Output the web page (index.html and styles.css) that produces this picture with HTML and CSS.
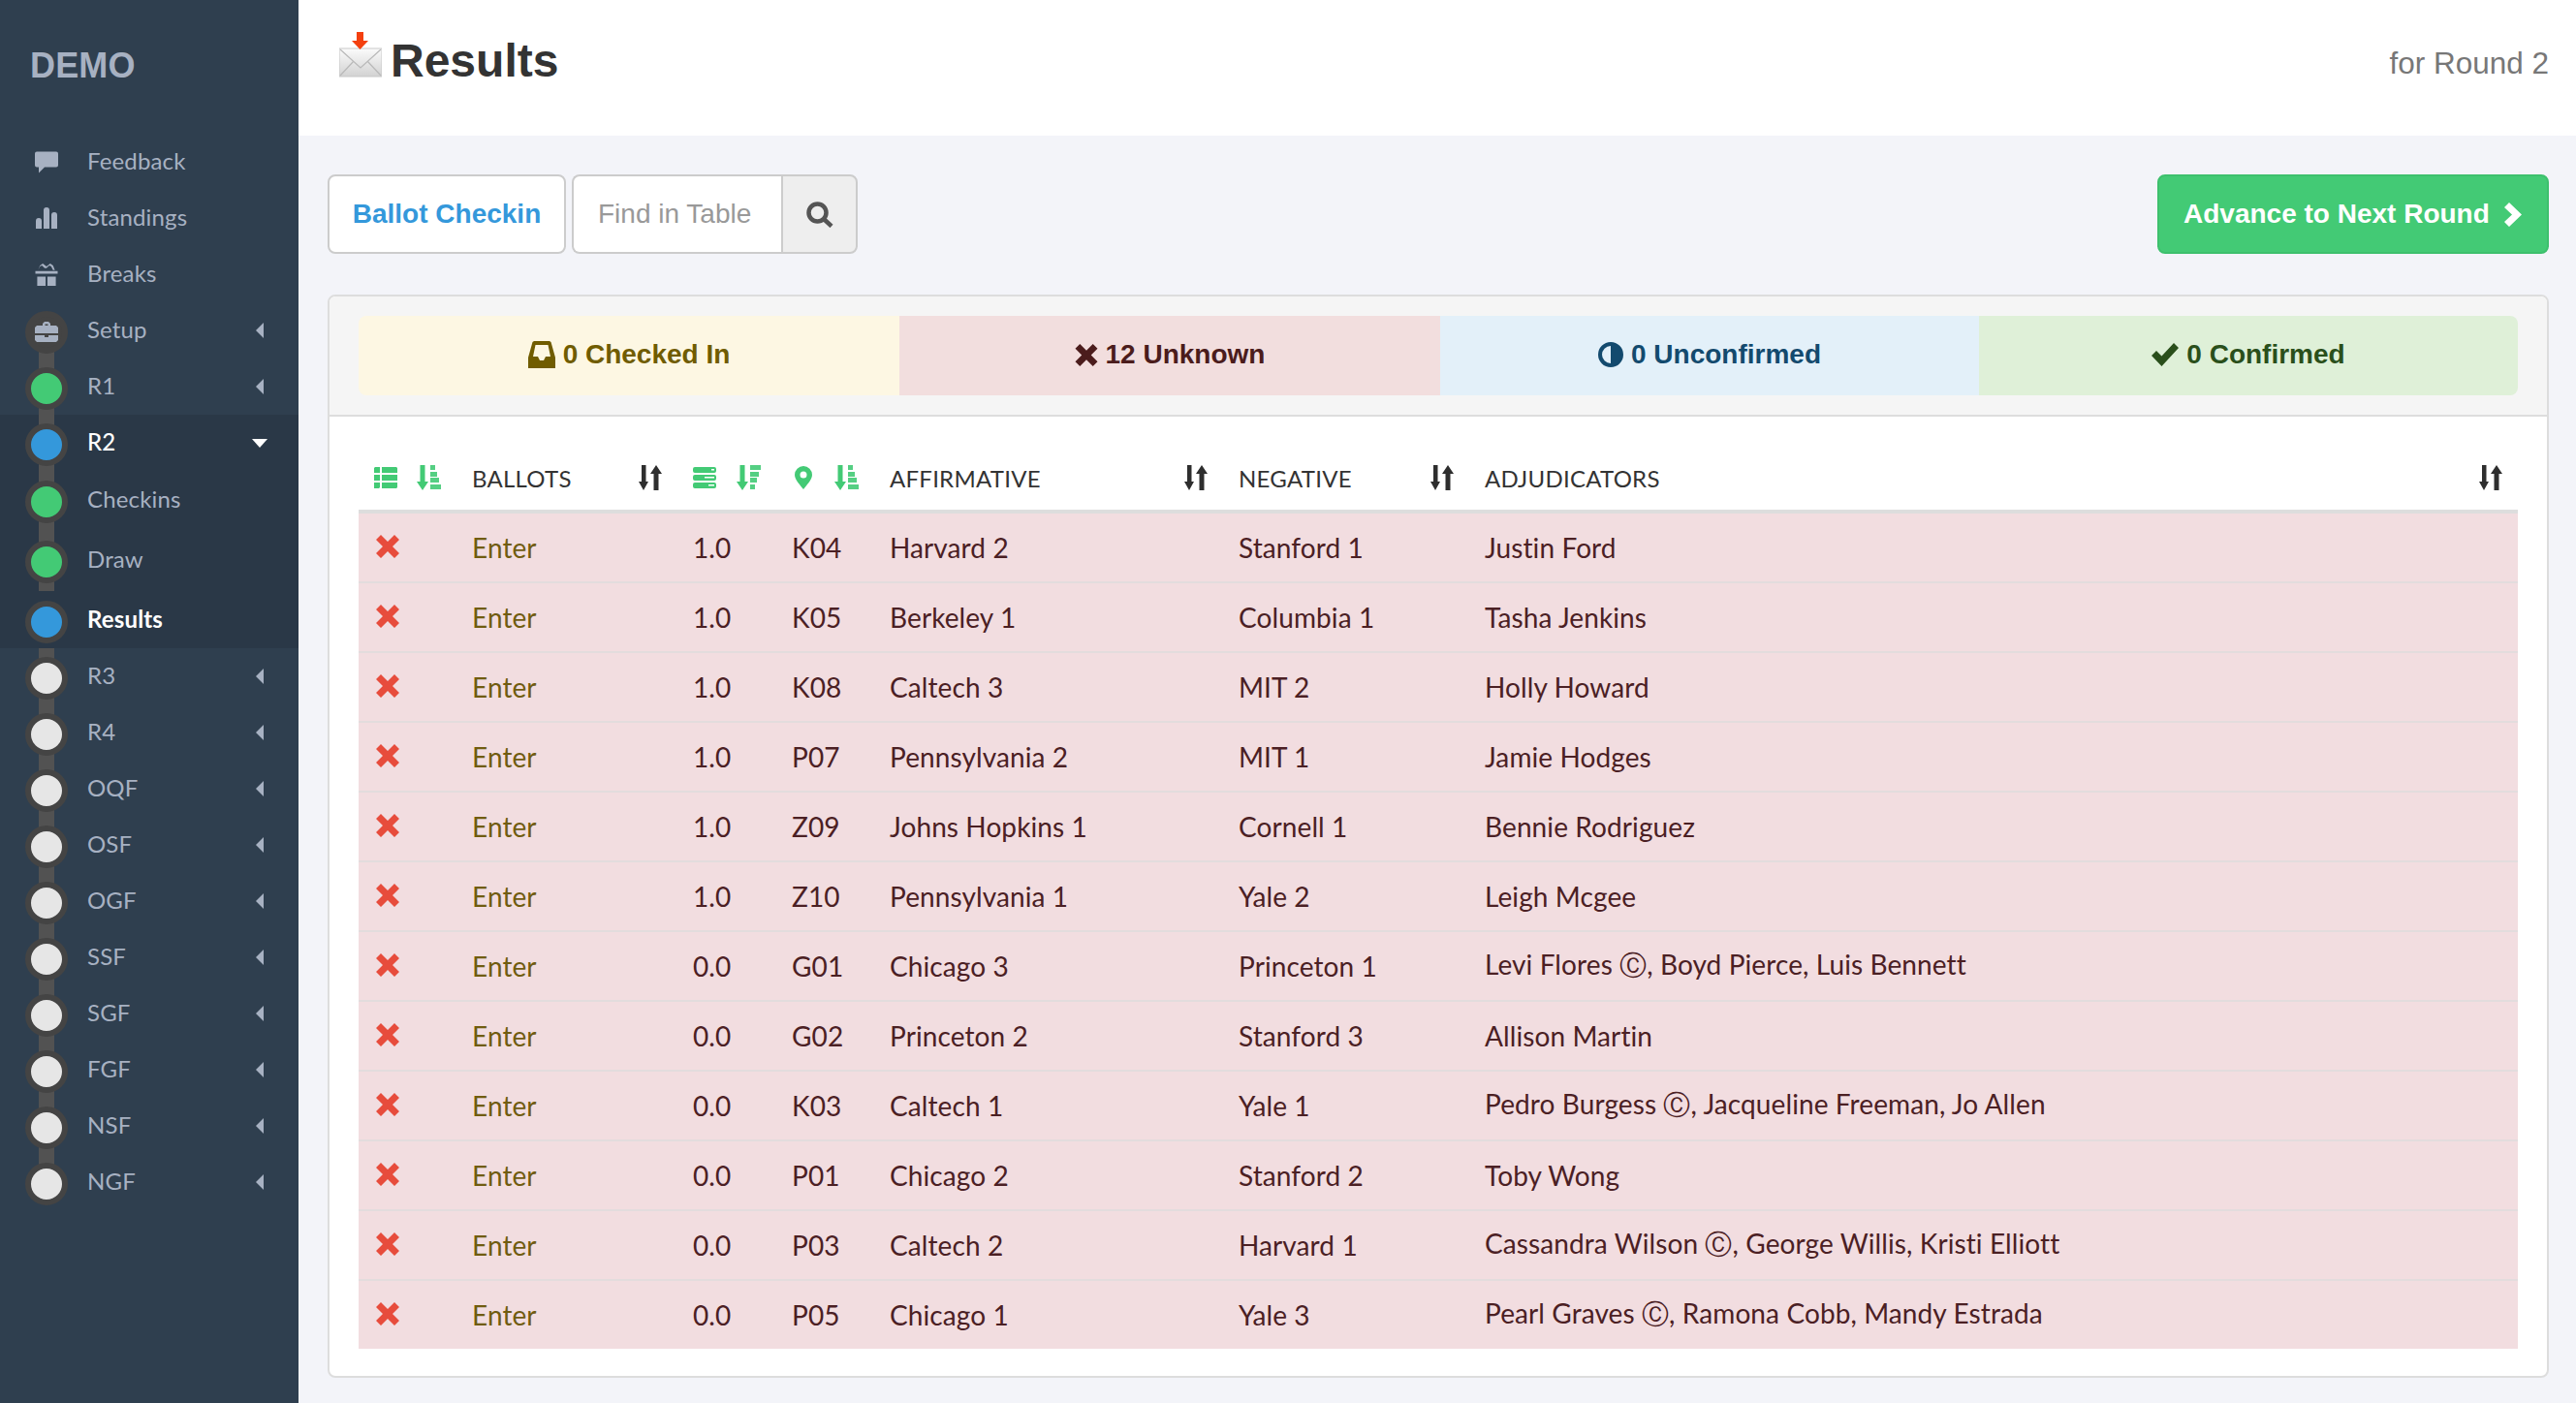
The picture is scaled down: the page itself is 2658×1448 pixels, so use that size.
FILE: index.html
```html
<!DOCTYPE html>
<html lang="en">
<head>
<meta charset="utf-8">
<title>Results</title>
<link rel="stylesheet" href="styles.css">
</head>
<body>
<svg class="sprite" width="0" height="0" aria-hidden="true">
  <symbol id="i-sort" viewBox="0 0 24 26"><path d="M3 0h4.500v17H10L5 26 0 17h3zM15.500 26V9H12l6-9 6 9h-3.500v17z"/></symbol>
  <symbol id="i-x" viewBox="0 0 24 24"><path d="M0 5 5 0l7 7 7-7 5 5-7 7 7 7-5 5-7-7-7 7-5-5 7-7z"/></symbol>
  <symbol id="i-list" viewBox="0 0 24 22"><path d="M1 0h5v6H0V1zM8 0h15l1 1v5H8zM0 8h6v6H0zM8 8h16v6H8zM0 16h6v5l-1 1H0zM8 16h16v5l-1 1H8z"/></symbol>
  <symbol id="i-asc" viewBox="0 0 25 26"><path d="M3.500 0h5v17H12l-6 9-6-9h3.500z"/><path d="M14 0h5v5h-5zM14 7h7v5h-7zM14 13h9v5h-9zM14 20h11v5H14z" opacity=".9"/></symbol>
  <symbol id="i-desc" viewBox="0 0 25 26"><path d="M3.500 0h5v17H12l-6 9-6-9h3.500z"/><path d="M14 0h11v5H14zM14 7h9v5h-9zM14 13h7v5h-7zM14 20h5v5h-5z" opacity=".9"/></symbol>
  <symbol id="i-tasks" viewBox="0 0 24 22"><path fill-rule="evenodd" d="M2 0h20a2 2 0 0 1 2 2v2a2 2 0 0 1-2 2H2a2 2 0 0 1-2-2V2a2 2 0 0 1 2-2zm17 2v1.500h3V2zM2 8h20a2 2 0 0 1 2 2v2a2 2 0 0 1-2 2H2a2 2 0 0 1-2-2v-2a2 2 0 0 1 2-2zm10 2v1.500h10V10zM2 16h20a2 2 0 0 1 2 2v2a2 2 0 0 1-2 2H2a2 2 0 0 1-2-2v-2a2 2 0 0 1 2-2zm14 2v1.500h6V18z"/></symbol>
  <symbol id="i-pin" viewBox="0 0 18 24"><path fill-rule="evenodd" d="M9 0a9 9 0 0 1 9 9c0 5-6 11-9 15C6 20 0 14 0 9a9 9 0 0 1 9-9zm0 5.500a3.500 3.500 0 1 0 0 7 3.500 3.500 0 0 0 0-7z"/></symbol>
  <symbol id="i-inbox" viewBox="0 0 28 28"><path fill-rule="evenodd" d="M6 0h16l1.500 1L28 17v11H0V17L4.500 1zm1.500 4L5 16h5l2 4h4l2-4h5L20.500 4z"/></symbol>
  <symbol id="i-check" viewBox="0 0 28 24"><path d="M0 13l5-5 5.500 5.500L23 0l5 5-17.500 19z"/></symbol>
  <symbol id="i-chev" viewBox="0 0 18 25"><path d="M5 0l13 12.500L5 25l-5-5 8-7.500L0 5z"/></symbol>
  <symbol id="i-search" viewBox="0 0 28 27"><path fill="none" stroke="currentColor" stroke-width="4.500" d="M11.500 2.500a9 9 0 1 0 0 18 9 9 0 0 0 0-18zM18 18l8 7.500"/></symbol>
  <symbol id="i-comment" viewBox="0 0 24 22"><path d="M2 0h20a2 2 0 0 1 2 2v12a2 2 0 0 1-2 2H10l-6 6v-6H2a2 2 0 0 1-2-2V2a2 2 0 0 1 2-2z"/></symbol>
  <symbol id="i-stats" viewBox="0 0 22 22"><path d="M0 14a3 3 0 0 1 6 0v8H0zM8 3a3 3 0 0 1 6 0v19H8zM16 8a3 3 0 0 1 6 0v14h-6z"/></symbol>
  <symbol id="i-gift" viewBox="0 0 24 24"><path fill-rule="evenodd" d="M2 24V14h9v10zM13 24V14h9v10zM0 11V8h24v3zM3 7l2-5 3-2 4 3 4-3 3 2 2 5h-2l-2-4-2-1-3 3-2 0-3-3-2 1-2 4z"/></symbol>
  <symbol id="i-case" viewBox="0 0 24 21"><path fill-rule="evenodd" d="M8 4V2l2-2h4l2 2v2h6l2 2v6H0V6l2-2zm2.500 0h3V2.500h-3zM0 14h10v2h4v-2h10v5l-2 2H2l-2-2z"/></symbol>
</svg>
<div class="app">
  <aside class="sidebar">
    <div class="brand">DEMO</div>
    <nav class="nav">
      <a class="row"><span class="slot"><svg class="ico i24"><use href="#i-comment"/></svg></span><span class="lbl">Feedback</span></a>
      <a class="row"><span class="slot"><svg class="ico i22"><use href="#i-stats"/></svg></span><span class="lbl">Standings</span></a>
      <a class="row"><span class="slot"><svg class="ico i24"><use href="#i-gift"/></svg></span><span class="lbl">Breaks</span></a>
      <a class="row track first"><span class="dot dark"><svg class="ico i24"><use href="#i-case"/></svg></span><span class="lbl">Setup</span><i class="caret"></i></a>
      <a class="row track"><span class="dot green"></span><span class="lbl">R1</span><i class="caret"></i></a>
      <div class="section">
        <a class="row track current"><span class="dot blue"></span><span class="lbl">R2</span><i class="caret down"></i></a>
        <div class="sub">
          <a class="row track"><span class="dot green"></span><span class="lbl">Checkins</span></a>
          <a class="row track"><span class="dot green"></span><span class="lbl">Draw</span></a>
          <a class="row current strong"><span class="dot blue"></span><span class="lbl">Results</span></a>
        </div>
      </div>
      <a class="row track"><span class="dot"></span><span class="lbl">R3</span><i class="caret"></i></a>
      <a class="row track"><span class="dot"></span><span class="lbl">R4</span><i class="caret"></i></a>
      <a class="row track"><span class="dot"></span><span class="lbl">OQF</span><i class="caret"></i></a>
      <a class="row track"><span class="dot"></span><span class="lbl">OSF</span><i class="caret"></i></a>
      <a class="row track"><span class="dot"></span><span class="lbl">OGF</span><i class="caret"></i></a>
      <a class="row track"><span class="dot"></span><span class="lbl">SSF</span><i class="caret"></i></a>
      <a class="row track"><span class="dot"></span><span class="lbl">SGF</span><i class="caret"></i></a>
      <a class="row track"><span class="dot"></span><span class="lbl">FGF</span><i class="caret"></i></a>
      <a class="row track"><span class="dot"></span><span class="lbl">NSF</span><i class="caret"></i></a>
      <a class="row track last"><span class="dot"></span><span class="lbl">NGF</span><i class="caret"></i></a>
    </nav>
  </aside>
  <main class="main">
    <header class="topbar">
      <h1 class="title">
        <svg class="envelope" viewBox="0 0 44 47">
          <defs><linearGradient id="env" x1="0" y1="0" x2="0" y2="1"><stop offset="0" stop-color="#fbfbfb"/><stop offset="1" stop-color="#d2d2d2"/></linearGradient></defs>
          <path d="M0 17h44v29H0z" fill="url(#env)" stroke="#c8c8c8"/>
          <path d="M1 18l21 19 21-19M1 45l14-15M43 45L29 30" fill="none" stroke="#b9b9b9" stroke-width="1.200"/>
          <path d="M18 0h7v9h5l-8.500 9L13 9h5z" fill="#f4400f"/>
        </svg>
        <span>Results</span>
      </h1>
      <div class="subtitle">for Round 2</div>
    </header>
    <section class="content">
      <div class="toolbar">
        <a class="btn btn-light">Ballot Checkin</a>
        <div class="search">
          <input class="search-input" placeholder="Find in Table">
          <span class="search-addon"><svg class="s-search"><use href="#i-search"/></svg></span>
        </div>
        <a class="btn btn-green">Advance to Next Round <svg class="s-chev"><use href="#i-chev"/></svg></a>
      </div>
      <div class="panel">
        <div class="panel-head">
          <div class="status">
            <div class="stat st-yellow"><svg class="s-inbox"><use href="#i-inbox"/></svg>0 Checked In</div>
            <div class="stat st-red"><svg class="s-x"><use href="#i-x"/></svg>12 Unknown</div>
            <div class="stat st-blue"><svg class="s-half" viewBox="0 0 26 26"><circle cx="13" cy="13" r="11" fill="none" stroke="currentColor" stroke-width="4"/><path d="M13 2a11 11 0 0 1 0 22z" fill="currentColor"/></svg>0 Unconfirmed</div>
            <div class="stat st-green"><svg class="s-check"><use href="#i-check"/></svg>0 Confirmed</div>
          </div>
        </div>
        <div class="panel-body">
          <table class="results">
            <colgroup><col class="c1"><col class="c2"><col class="c3"><col class="c4"><col class="c5"><col class="c6"><col class="c7"></colgroup>
            <thead>
              <tr>
                <th><div class="th"><svg class="g l24"><use href="#i-list"/></svg><svg class="g s25"><use href="#i-asc"/></svg></div></th>
                <th><div class="th"><span>BALLOTS</span><svg class="sort"><use href="#i-sort"/></svg></div></th>
                <th><div class="th"><svg class="g l24"><use href="#i-tasks"/></svg><svg class="g s25"><use href="#i-desc"/></svg></div></th>
                <th><div class="th pinned"><svg class="g p18"><use href="#i-pin"/></svg><svg class="g s25"><use href="#i-asc"/></svg></div></th>
                <th><div class="th"><span>AFFIRMATIVE</span><svg class="sort"><use href="#i-sort"/></svg></div></th>
                <th><div class="th"><span>NEGATIVE</span><svg class="sort"><use href="#i-sort"/></svg></div></th>
                <th><div class="th"><span>ADJUDICATORS</span><svg class="sort"><use href="#i-sort"/></svg></div></th>
              </tr>
            </thead>
            <tbody>
              <tr><td><svg class="rm"><use href="#i-x"/></svg></td><td class="enter">Enter</td><td>1.0</td><td>K04</td><td>Harvard 2</td><td>Stanford 1</td><td>Justin Ford</td></tr>
              <tr><td><svg class="rm"><use href="#i-x"/></svg></td><td class="enter">Enter</td><td>1.0</td><td>K05</td><td>Berkeley 1</td><td>Columbia 1</td><td>Tasha Jenkins</td></tr>
              <tr><td><svg class="rm"><use href="#i-x"/></svg></td><td class="enter">Enter</td><td>1.0</td><td>K08</td><td>Caltech 3</td><td>MIT 2</td><td>Holly Howard</td></tr>
              <tr><td><svg class="rm"><use href="#i-x"/></svg></td><td class="enter">Enter</td><td>1.0</td><td>P07</td><td>Pennsylvania 2</td><td>MIT 1</td><td>Jamie Hodges</td></tr>
              <tr><td><svg class="rm"><use href="#i-x"/></svg></td><td class="enter">Enter</td><td>1.0</td><td>Z09</td><td>Johns Hopkins 1</td><td>Cornell 1</td><td>Bennie Rodriguez</td></tr>
              <tr><td><svg class="rm"><use href="#i-x"/></svg></td><td class="enter">Enter</td><td>1.0</td><td>Z10</td><td>Pennsylvania 1</td><td>Yale 2</td><td>Leigh Mcgee</td></tr>
              <tr><td><svg class="rm"><use href="#i-x"/></svg></td><td class="enter">Enter</td><td>0.0</td><td>G01</td><td>Chicago 3</td><td>Princeton 1</td><td>Levi Flores Ⓒ, Boyd Pierce, Luis Bennett</td></tr>
              <tr><td><svg class="rm"><use href="#i-x"/></svg></td><td class="enter">Enter</td><td>0.0</td><td>G02</td><td>Princeton 2</td><td>Stanford 3</td><td>Allison Martin</td></tr>
              <tr><td><svg class="rm"><use href="#i-x"/></svg></td><td class="enter">Enter</td><td>0.0</td><td>K03</td><td>Caltech 1</td><td>Yale 1</td><td>Pedro Burgess Ⓒ, Jacqueline Freeman, Jo Allen</td></tr>
              <tr><td><svg class="rm"><use href="#i-x"/></svg></td><td class="enter">Enter</td><td>0.0</td><td>P01</td><td>Chicago 2</td><td>Stanford 2</td><td>Toby Wong</td></tr>
              <tr><td><svg class="rm"><use href="#i-x"/></svg></td><td class="enter">Enter</td><td>0.0</td><td>P03</td><td>Caltech 2</td><td>Harvard 1</td><td>Cassandra Wilson Ⓒ, George Willis, Kristi Elliott</td></tr>
              <tr><td><svg class="rm"><use href="#i-x"/></svg></td><td class="enter">Enter</td><td>0.0</td><td>P05</td><td>Chicago 1</td><td>Yale 3</td><td>Pearl Graves Ⓒ, Ramona Cobb, Mandy Estrada</td></tr>
            </tbody>
          </table>
        </div>
      </div>
    </section>
  </main>
</div>
</body>
</html>
```
FILE: styles.css
```css
* { box-sizing: border-box; }
html, body { margin: 0; height: 100%; }
body {
  font-family: "Lato", "DejaVu Sans", sans-serif;
  background: #f3f4f9;
  overflow: hidden;
}
.sprite { position: absolute; }
.app { display: flex; height: 1448px; }

/* Sidebar */
.sidebar { width: 308px; flex: none; background: #2f3f4f; color: #a7b1c2; font-size: 24px; letter-spacing: .15px; }
.brand {
  height: 138px;
  padding: 48px 0 0 31px;
  font: bold 36px/40px "Liberation Sans", Arial, sans-serif;
  color: #a7b1c2;
}
.nav { display: flex; flex-direction: column; }
.row {
  position: relative;
  display: flex;
  align-items: center;
  height: 58px;
  padding-left: 26px;
}
.lbl { margin-bottom: 3px; }
.slot, .dot {
  position: relative;
  z-index: 1;
  width: 44px;
  height: 44px;
  margin-right: 20px;
  flex: none;
  display: flex;
  align-items: center;
  justify-content: center;
}
.slot svg { fill: #a7b1c2; }
.dot {
  margin-top: 4px;
  border-radius: 50%;
  border: 6px solid #444;
  background: #e6e6e6;
}
.dot.green { background: #43ca75; }
.dot.blue { background: #3498db; }
.dot.dark { background: #444; margin-top: 4px; }
.dark svg { fill: #a7b1c2; position: relative; top: -1px; }
.ico { display: block; }
.i24 { width: 24px; height: 23px; }
.i22 { width: 22px; height: 22px; }
.track::before {
  content: "";
  position: absolute;
  left: 40px;
  width: 16px;
  top: 0;
  bottom: 0;
  background: #525252;
}
.track.first::before { top: 50%; }
.track.last::before { bottom: 50%; }
.caret {
  position: absolute;
  left: 264px;
  top: 21px;
  width: 0;
  height: 0;
  border-style: solid;
  border-width: 8px 8px 8px 0;
  border-color: transparent #a7b1c2 transparent transparent;
}
.caret.down {
  left: 260px;
  top: 25px;
  border-width: 9px 8px 0 8px;
  border-color: #fff transparent transparent transparent;
}
.section { background: #2a3847; height: 241px; }
.sub { display: flex; flex-direction: column; gap: 4px; padding-top: 1px; }
.sub .track::before { top: -4px; bottom: -3px; }
.current { color: #fff; font-weight: 500; }
.strong { font-weight: 700; }

/* Main */
.main { flex: 1; min-width: 0; display: flex; flex-direction: column; }
.topbar {
  height: 140px;
  flex: none;
  background: #fff;
  display: flex;
  justify-content: space-between;
  align-items: flex-start;
  padding: 33px 28px 0 42px;
  font-family: "Liberation Sans", Arial, sans-serif;
}
.title {
  display: flex;
  align-items: flex-start;
  gap: 9px;
  margin: 0;
  font-size: 48px;
  line-height: 48px;
  font-weight: 700;
  color: #333;
}
.title span { margin-top: 6px; }
.envelope { width: 44px; height: 47px; flex: none; }
.subtitle { margin-top: 12px; font-size: 31.5px; line-height: 40px; color: #777; }

.content { padding: 40px 28px 0 30px; }
.toolbar {
  display: flex;
  gap: 6px;
  height: 82px;
  margin-bottom: 42px;
  font-family: "Liberation Sans", Arial, sans-serif;
  font-size: 28px;
}
.btn {
  display: flex;
  align-items: center;
  height: 82px;
  border-radius: 8px;
  font-weight: 700;
}
.btn-light { width: 246px; justify-content: center; background: #fff; border: 2px solid #ccc; color: #3498db; }
.btn-green {
  width: 404px;
  margin-left: auto;
  justify-content: flex-start;
  gap: 8px;
  padding-left: 25px;
  background: #43ca75;
  border: 2px solid #3dc06d;
  color: #fff;
}
.s-chev { width: 18px; height: 25px; fill: #fff; margin-left: 7px; }
.search { display: flex; width: 295px; }
.search-input {
  width: 216px;
  height: 82px;
  padding: 0 0 0 25px;
  border: 2px solid #ccc;
  border-right: 0;
  border-radius: 8px 0 0 8px;
  background: #fff;
  font: 28px "Liberation Sans", Arial, sans-serif;
  outline: 0;
}
.search-input::placeholder { color: #999; opacity: 1; }
.search-addon {
  flex: 1;
  display: flex;
  align-items: center;
  justify-content: center;
  border: 2px solid #ccc;
  border-radius: 0 8px 8px 0;
  background: #eee;
  color: #555;
}
.s-search { width: 28px; height: 27px; }

.panel {
  height: 1118px;
  background: #fff;
  border: 2px solid #ddd;
  border-radius: 8px;
}
.panel-head {
  height: 124px;
  padding: 20px 30px;
  background: #f5f5f5;
  border-bottom: 2px solid #ddd;
  border-radius: 6px 6px 0 0;
}
.status { display: grid; grid-template-columns: 558px 558px 556px 556px; height: 82px; }
.stat {
  display: flex;
  align-items: center;
  justify-content: center;
  gap: 8px;
  padding-bottom: 2px;
  font: bold 28px "Liberation Sans", Arial, sans-serif;
}
.st-yellow { background: #fdf7e3; color: #705c00; border-radius: 8px 0 0 8px; }
.st-red { background: #f2dede; color: #4b1c1c; }
.st-blue { background: #e3f0f9; color: #134a6e; }
.st-green { background: #dff0d8; color: #2a4f1b; border-radius: 0 8px 8px 0; }
.s-inbox { width: 28px; height: 28px; fill: currentColor; }
.s-x { width: 24px; height: 23px; fill: currentColor; }
.s-half { width: 26px; height: 26px; }
.s-check { width: 28px; height: 24px; fill: currentColor; }

.panel-body { padding: 30px 30px 28px; }
.results {
  width: 100%;
  table-layout: fixed;
  border-collapse: separate;
  border-spacing: 0;
  font-size: 28px;
  letter-spacing: .1px;
  color: #4b2024;
}
.c1 { width: 101px; } .c2 { width: 228px; } .c3 { width: 102px; } .c4 { width: 101px; }
.c5 { width: 360px; } .c6 { width: 254px; } .c7 { width: 1082px; }
.results th {
  height: 70px;
  padding: 0 16px;
  border-bottom: 4px solid #ddd;
  font-size: 24px;
  letter-spacing: .25px;
  font-weight: 400;
  color: #333;
  text-align: left;
}
.th { display: flex; align-items: center; justify-content: space-between; }
.results td {
  height: 72px;
  padding: 0 16px;
  background: #f2dde0;
  border-top: 2px solid #e3dcdd;
  white-space: nowrap;
}
.results tbody tr:first-child td { height: 70px; border-top: 0; }
.enter { color: #705c10; }
.g { fill: #43ca75; flex: none; display: block; }
.l24 { width: 24px; height: 22px; }
.s25 { width: 25px; height: 26px; }
.p18 { width: 18px; height: 24px; margin-left: 3px; }
.sort { width: 24px; height: 26px; fill: #2e2e2e; flex: none; display: block; }
.rm { width: 24px; height: 24px; fill: #e74c3c; display: block; margin: -3px 0 0 2px; }
```
